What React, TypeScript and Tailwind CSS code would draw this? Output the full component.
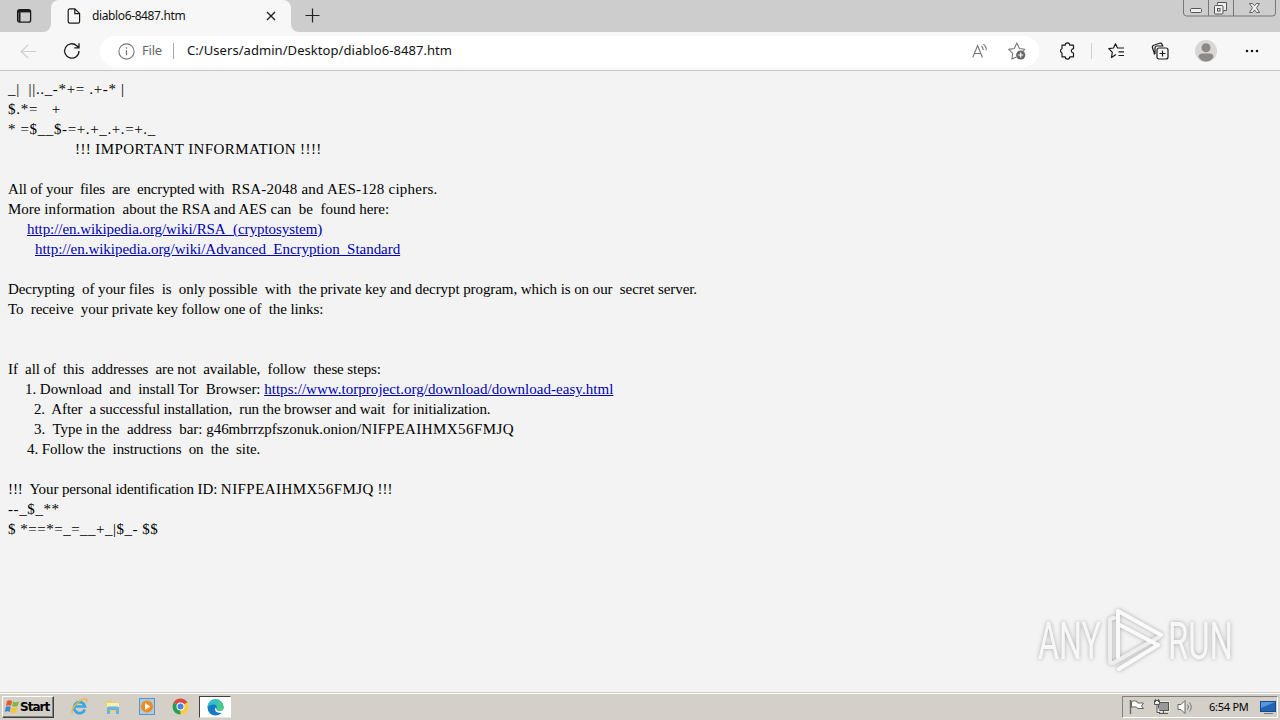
import React from 'react';

interface Part {
  text: string;
  link?: boolean;
  className?: string;
}

interface Line {
  parts: Part[];
  className?: string;
}

const lines: Line[] = [
  { parts: [{ text: '_|  ||.._-*+= .+-* |' }], className: 'tracking-[0.65px]' },
  { parts: [{ text: '$.*=   +' }], className: 'tracking-[0.75px]' },
  { parts: [{ text: '* =$__$-=+.+_.+.=+._' }], className: 'tracking-[0.62px]' },
  { parts: [{ text: '!!! IMPORTANT INFORMATION !!!!' }], className: 'pl-[67px] tracking-[0.4px]' },
  { parts: [] },
  {
    parts: [
      { text: 'All of your  files  are  encrypted with  ', className: 'tracking-[-0.17px]' },
      { text: 'RSA-2048 and AES-128 ciphers.', className: 'tracking-[0.24px]' },
    ],
  },
  { parts: [{ text: 'More information  about the RSA and AES can  be  found here:' }] },
  {
    parts: [{ text: 'http://en.wikipedia.org/wiki/RSA_(cryptosystem)', link: true }],
    className: 'pl-[19px] tracking-[-0.06px]',
  },
  {
    parts: [{ text: 'http://en.wikipedia.org/wiki/Advanced_Encryption_Standard', link: true }],
    className: 'pl-[27px] tracking-[-0.035px]',
  },
  { parts: [] },
  {
    parts: [{ text: 'Decrypting  of your files  is  only possible  with  the private key and decrypt program, which is on our  secret server.' }],
    className: 'tracking-[-0.08px]',
  },
  { parts: [{ text: 'To  receive  your private key follow one of  the links:' }], className: 'tracking-[-0.08px]' },
  { parts: [] },
  { parts: [] },
  {
    parts: [{ text: 'If  all of  this  addresses  are not  available,  follow  these steps:' }],
    className: 'tracking-[-0.1px]',
  },
  {
    parts: [
      { text: '1. Download  and  install Tor  Browser: ', className: 'tracking-[-0.05px]' },
      { text: 'https://www.torproject.org/download/download-easy.html', link: true, className: 'tracking-[0.035px]' },
    ],
    className: 'pl-[17px]',
  },
  {
    parts: [{ text: '2.  After  a successful installation,  run the browser and wait  for initialization.' }],
    className: 'pl-[26px] tracking-[-0.14px]',
  },
  {
    parts: [
      { text: '3.  Type in the  address  bar: g46mbrrzpfszonuk.onion/', className: 'tracking-[-0.02px]' },
      { text: 'NIFPEAIHMX56FMJQ', className: 'tracking-[0.44px]' },
    ],
    className: 'pl-[26px]',
  },
  {
    parts: [{ text: '4. Follow the  instructions  on  the  site.' }],
    className: 'pl-[19px] tracking-[-0.1px]',
  },
  { parts: [] },
  {
    parts: [
      { text: '!!!  Your personal identification ID: ', className: 'tracking-[-0.11px]' },
      { text: 'NIFPEAIHMX56FMJQ', className: 'tracking-[0.44px]' },
      { text: ' !!!' },
    ],
  },
  { parts: [{ text: '--_$_**' }], className: 'tracking-[0.6px]' },
  { parts: [{ text: '$ *==*=_=__+_|$_- $$' }], className: 'tracking-[0.5px]' },
];

function TabStrip() {
  return (
    <div className="flex h-8 items-start bg-[#f7f7f7]">
      <div className="flex h-8 w-[51px] items-center justify-center rounded-br-lg bg-[#cdcdcd] pr-[3px]">
        <svg width="16" height="16" viewBox="0 0 16 16" fill="none" stroke="#1b1b1b" strokeWidth="1.3">
          <rect x="1.6" y="1.6" width="13" height="12.6" rx="2" />
          <path d="M2 3.2h12.4" strokeWidth="2.4" />
          <path d="M3.5 3v11" strokeWidth="2" />
        </svg>
      </div>
      <div className="bg-[linear-gradient(#cdcdcd_50%,#f7f7f7_50%)]">
        <div className="flex h-8 w-[240px] items-center rounded-t-lg bg-[#f7f7f7] pl-4">
          <svg width="14" height="16" viewBox="0 0 14 16" fill="none" stroke="#1b1b1b" strokeWidth="1.2">
            <path d="M2.6.8h5.2L12.6 5.400v8.200a1.600 1.600 0 0 1-1.600 1.600H2.800a1.600 1.600 0 0 1-1.600-1.600V2.400A1.600 1.600 0 0 1 2.600.8zM7.800 1v4.600h4.600" />
          </svg>
          <span className="ml-[11px] w-[163px] text-[12px] leading-4 tracking-[-0.38px] text-[#111]">diablo6-8487.htm</span>
          <svg className="ml-[11px]" width="10" height="10" viewBox="0 0 10 10" stroke="#222" strokeWidth="1.4">
            <path d="M1 1l8 8M9 1L1 9" />
          </svg>
        </div>
      </div>
      <div className="flex h-8 flex-1 items-start rounded-bl-lg bg-[#cdcdcd]">
        <svg className="ml-[14px] mt-[8px]" width="15" height="15" viewBox="0 0 15 15" stroke="#222" strokeWidth="1.2">
          <path d="M7.500 .5v14M.5 7.500h14" />
        </svg>
        <svg className="ml-auto mr-[3px]" width="95" height="18" viewBox="0 0 95 18" fill="none" stroke="#777">
          <path d="M1.500 0v13q0 3 3 3h86q3 0 3-3V0M26.500 0v16M51.500 0v16" />
          <rect x="8.500" y="8.500" width="11" height="4" rx="1.200" fill="#eee" stroke="#555" />
          <path d="M35.500 4.500v-2h9v8h-3" fill="#eee" stroke="#555" />
          <rect x="32.500" y="5.500" width="8.500" height="8.500" rx="1" fill="#eee" stroke="#555" />
          <rect x="35.500" y="8.500" width="2.500" height="2.500" stroke="#555" />
          <path d="M67.500 3.500h3l2 2.300 2-2.300h3l-3 4.300 3 4.700h-3l-2-2.600-2 2.600h-3l3-4.700z" fill="#eee" stroke="#555" strokeWidth=".9" />
        </svg>
      </div>
    </div>
  );
}

function Toolbar() {
  return (
    <div className="flex h-[39px] items-center border-b border-[#c4c4c4] bg-[#f7f7f7]">
      <svg className="ml-5" width="17" height="15" viewBox="0 0 17 15" fill="none" stroke="#cfcfcf" strokeWidth="1.200">
        <path d="M16 7.500H1.500M8 1L1.200 7.500 8 14" />
      </svg>
      <svg className="ml-[26px]" width="18" height="18" viewBox="0 0 18 18" fill="none" stroke="#1b1b1b" strokeWidth="1.300">
        <path d="M16 9a7.200 7.200 0 1 1-2.300-5.300L16 5.800M16 1.200v4.700h-4.700" />
      </svg>
      <div className="ml-[19px] flex h-[31px] w-[939px] items-center rounded-full bg-white pl-[18px] pr-[13px]">
        <svg width="17" height="17" viewBox="0 0 17 17" fill="none" stroke="#777" strokeWidth="1.100">
          <circle cx="8.500" cy="8.500" r="7.600" />
          <path d="M8.500 7.300v5M8.500 4.300v1.400" strokeWidth="1.300" />
        </svg>
        <span className="ml-[7px] w-[31px] text-[13px] tracking-[-0.2px] text-[#666]">File</span>
        <span className="h-4 w-px bg-[#aaa]" />
        <span className="ml-[13px] text-[13px] tracking-[0.06px] text-[#111]">C:/Users/admin/Desktop/diablo6-8487.htm</span>
        <svg className="ml-auto" width="16" height="16" viewBox="0 0 16 16" fill="none" stroke="#777" strokeWidth="1.100">
          <path d="M.8 14.500L5.600 2.500l4.800 12M2.300 10.500h6.600M9.500 3.300q1.700 1.300 1.700 3.700M11.300 1.300q3.200 2 2.900 6" />
        </svg>
        <svg className="ml-[20px]" width="18" height="18" viewBox="0 0 18 18" fill="none">
          <path d="M8.500 15l-4.600 2 .8-5.600-4-4 5.600-.9L8.800 1l2.600 5.500 5.400.8-2 2" stroke="#777" strokeWidth="1.100" strokeLinejoin="round" />
          <circle cx="12.700" cy="13" r="4.600" fill="#666" />
          <path d="M12.700 10.500v5M10.200 13h5" stroke="#fff" strokeWidth="1.200" />
        </svg>
      </div>
      <svg className="ml-[20px]" width="18" height="18" viewBox="0 0 18 18" fill="none" stroke="#1b1b1b" strokeWidth="1.200" strokeLinejoin="round">
        <path d="M3 3.200h3.200a2.300 2.300 0 0 1 4.600 0h3.700v3.500a1.800 1.800 0 1 0 0 4.300v3.800h-3.700a2.300 2.300 0 0 1-4.600 0H3V11a2.300 2.300 0 0 1 0-4.300z" />
      </svg>
      <span className="ml-[14px] h-4 w-px bg-[#d0d0d0]" />
      <svg className="ml-4" width="17" height="16" viewBox="0 0 17 16" fill="none" stroke="#1b1b1b" strokeWidth="1.200" strokeLinejoin="round">
        <path d="M8 11.500l-4.500 3 .8-5.200-3.500-3.600 4.700-.7L7.500.8 9.500 5H16M10.500 8.800H16M10.500 12.500H16" />
      </svg>
      <svg className="ml-[26px]" width="18" height="18" viewBox="0 0 18 18" fill="none" stroke="#1b1b1b" strokeWidth="1.200">
        <rect x="6" y="6" width="11" height="11" rx="2" />
        <path d="M11.500 8.500v6M8.500 11.500h6M3.700 12.600L1.500 5.700a2 2 0 0 1 1.300-2.500L8.700 1.300a2 2 0 0 1 2.500 1.300l.4 1.300M4 12V6a2 2 0 0 1 2-2h6.500" />
      </svg>
      <svg className="ml-[25px]" width="24" height="24" viewBox="0 0 24 24">
        <circle cx="12" cy="12" r="11" fill="#d9d6d3" />
        <circle cx="12" cy="8.800" r="4.500" fill="#8c8987" />
        <path d="M4.500 18q0-3.500 4-3.500h7q4 0 4 3.500-3 4.500-7.500 4.500T4.500 18z" fill="#8c8987" />
      </svg>
      <svg className="ml-[26px]" width="16" height="4" viewBox="0 0 16 4" fill="#1b1b1b">
        <circle cx="3" cy="2" r="1.300" />
        <circle cx="8" cy="2" r="1.300" />
        <circle cx="13" cy="2" r="1.300" />
      </svg>
    </div>
  );
}

function Watermark() {
  return (
    <svg className="absolute right-[6px] bottom-[13px] drop-shadow-[0_0_2px_rgba(0,0,0,0.3)]" width="240" height="76" viewBox="0 0 240 76">
      <g fill="#f7f7f7" fontFamily="Roboto, sans-serif" fontSize="51">
        <text x="4" y="56" textLength="63" lengthAdjust="spacingAndGlyphs">ANY</text>
        <text x="134" y="56" textLength="65" lengthAdjust="spacingAndGlyphs">RUN</text>
      </g>
      <g fill="none" stroke="#fafafa" strokeWidth="4" strokeLinecap="round" strokeLinejoin="round">
        <path d="M80 15q-4 0-4 3v39q0 5 5 2l44-25" stroke="#eee" />
        <path d="M127 32L84 8v46M86 22l38 20-39 24" />
      </g>
    </svg>
  );
}

function Taskbar() {
  return (
    <div className="flex h-[28px] items-center border-t border-[#d4d0c8] bg-[#d4d0c8] font-['Noto_Sans',sans-serif] shadow-[inset_0_1px_0_#fff]">
      <button className="mt-px ml-0.5 flex h-[22px] w-[52px] items-center border border-t-white border-l-white border-r-[#404040] border-b-[#404040] pl-px shadow-[inset_-1px_-1px_0_#808080]">
        <svg width="16" height="16" viewBox="0 0 16 16">
          <path d="M3 2q2.500-1.500 5 0L7 7q-2.500-1.500-5 0z" fill="#e8572a" />
          <path d="M9 2.500q2.500 1.500 6 0L13.600 7q-3 1.500-5.600 0z" fill="#7dbb42" />
          <path d="M1.700 8q2.500-1.500 5 0l-1 5q-2.500-1.500-5 0z" fill="#3b8bd0" />
          <path d="M7.700 8.300q2.500 1.500 5.600 0l-1.300 5q-3 1.500-5.300 0z" fill="#f7c331" />
        </svg>
        <span className="font-['DejaVu_Sans',sans-serif] text-[12px] font-bold tracking-[-0.98px] text-black">Start</span>
      </button>
      <svg className="ml-[17px]" width="17" height="17" viewBox="0 0 17 17" fill="none">
        <path d="M13.800 11.500A5.500 5.500 0 1 1 14 8.500H4" stroke="#3aa5e0" strokeWidth="2.700" />
        <path d="M1.500 15.500C-1 11 9 1 14 1q2.500 0 1.300 3.300" stroke="#e9b63b" strokeWidth="1.300" />
      </svg>
      <svg className="ml-[17px]" width="16" height="16" viewBox="0 0 16 16">
        <path d="M1 1.500h5l1 1.500h7v10H1z" fill="#e9cf78" />
        <path d="M2 4h12v5H2z" fill="#fbf0bb" />
        <path d="M2 15V9q0-1.500 1.500-1.500h9Q14 7.500 14 9v6h-3v-4H5v4z" fill="#68b4dc" />
      </svg>
      <svg className="ml-[18px]" width="16" height="17" viewBox="0 0 16 17">
        <rect x=".5" y=".5" width="15" height="16" fill="#a8cdeb" stroke="#5c94c8" />
        <circle cx="8" cy="8.500" r="6" fill="#f28a1c" />
        <path d="M6 5l5.300 3.500L6 12z" fill="#fff" />
      </svg>
      <svg className="ml-[17px]" width="17" height="17" viewBox="0 0 17 17">
        <path d="M8.500 8.500L1.600 4.500A8 8 0 0 1 15.400 4.500z" fill="#dd4b3e" />
        <path d="M8.500 8.500L15.400 4.500A8 8 0 0 1 8.500 16.500z" fill="#fbcd3a" />
        <path d="M8.500 8.500v8A8 8 0 0 1 1.600 4.500z" fill="#2a9d51" />
        <circle cx="8.500" cy="8.500" r="4" fill="#fff" />
        <circle cx="8.500" cy="8.500" r="3" fill="#4285e8" />
      </svg>
      <div className="mt-px ml-[10px] flex h-[22px] w-[32px] items-center justify-center border border-t-[#404040] border-l-[#404040] border-r-white border-b-[#e4e2dd] bg-white">
        <svg width="17" height="17" viewBox="0 0 17 17">
          <circle cx="8.500" cy="8.500" r="8" fill="#1579c4" />
          <path d="M.5 8A8 8 0 0 1 16.500 8q0 4-4.500 4-3 0-2.500-2 1.500-4-2.500-4.500T.5 8z" fill="#35bfc9" />
          <path d="M11 1.200q5.500 2 5.500 6.800 0 4-4.500 4-3 0-2.500-2z" fill="#49c98a" />
          <path d="M9.500 10q-.5 2 2.500 2 2.500 0 3.600-1.100l1.400.6-2 3-2-.7Q7.500 14 8 8.500z" fill="#fff" />
        </svg>
      </div>
      <div className="mt-px ml-auto mr-0.5 flex h-[22px] w-[156px] items-center border border-t-[#808080] border-l-[#808080] border-r-white border-b-white pl-[6px]">
        <svg width="17" height="16" viewBox="0 0 17 16" fill="#fff" stroke="#666">
          <path d="M1.500 1v14" strokeWidth="1.400" />
          <path d="M2.500 2.500q3-1.500 5.500 0l.5 1.500h6l-2 3 2 2.500h-6l-1-1.500q-3-.7-5 .5z" />
        </svg>
        <svg className="ml-[7px]" width="17" height="16" viewBox="0 0 17 16" fill="#eee" stroke="#555">
          <rect x="5" y="3" width="11" height="9" fill="#aaa" stroke="#fff" />
          <rect x="5.500" y="3.500" width="10" height="8" fill="#999" />
          <path d="M6 14.500h9M10.500 12v2" />
          <path d="M1.500 1.500h5v4h-5zM2.500 0v3M5.500 0v3M4 5.500v8h3" />
        </svg>
        <svg className="ml-[7px]" width="17" height="16" viewBox="0 0 17 16" fill="none" stroke="#777">
          <path d="M1 5.500h3L8 1.500v13l-4-4H1z" fill="#fff" stroke="#666" />
          <path d="M10.500 5.500q2 2.500 0 5M12.500 3.500q3.500 4.500 0 9" />
        </svg>
        <span className="ml-[15px] w-[42px] text-[11px] tracking-[-0.25px] whitespace-nowrap text-black">6:54 PM</span>
        <svg className="ml-[9px]" width="16" height="15" viewBox="0 0 16 15">
          <rect x=".5" y="1.500" width="15" height="10" fill="#2564b4" stroke="#17498e" />
          <path d="M1 2h14L1 8z" fill="#5597dc" />
          <path d="M4 13.500h9" stroke="#777" />
        </svg>
      </div>
    </div>
  );
}

export default function App() {
  return (
    <div className="flex h-[720px] w-[1280px] flex-col overflow-hidden bg-[#f3f3f3] font-['Noto_Sans',sans-serif]">
      <TabStrip />
      <Toolbar />
      <main className="relative flex-1 px-2 pt-2 font-['Liberation_Serif',serif] text-[15px] leading-5 whitespace-pre text-black">
        {lines.map((line, i) => (
          <div key={i} className={`h-5 ${line.className ?? ''}`}>
            {line.parts.map((part, j) =>
              part.link ? (
                <a key={j} href="#" className={`text-[#0000b0] underline ${part.className ?? ''}`}>{part.text}</a>
              ) : (
                <span key={j} className={part.className}>{part.text}</span>
              )
            )}
          </div>
        ))}
        <Watermark />
      </main>
      <Taskbar />
    </div>
  );
}
